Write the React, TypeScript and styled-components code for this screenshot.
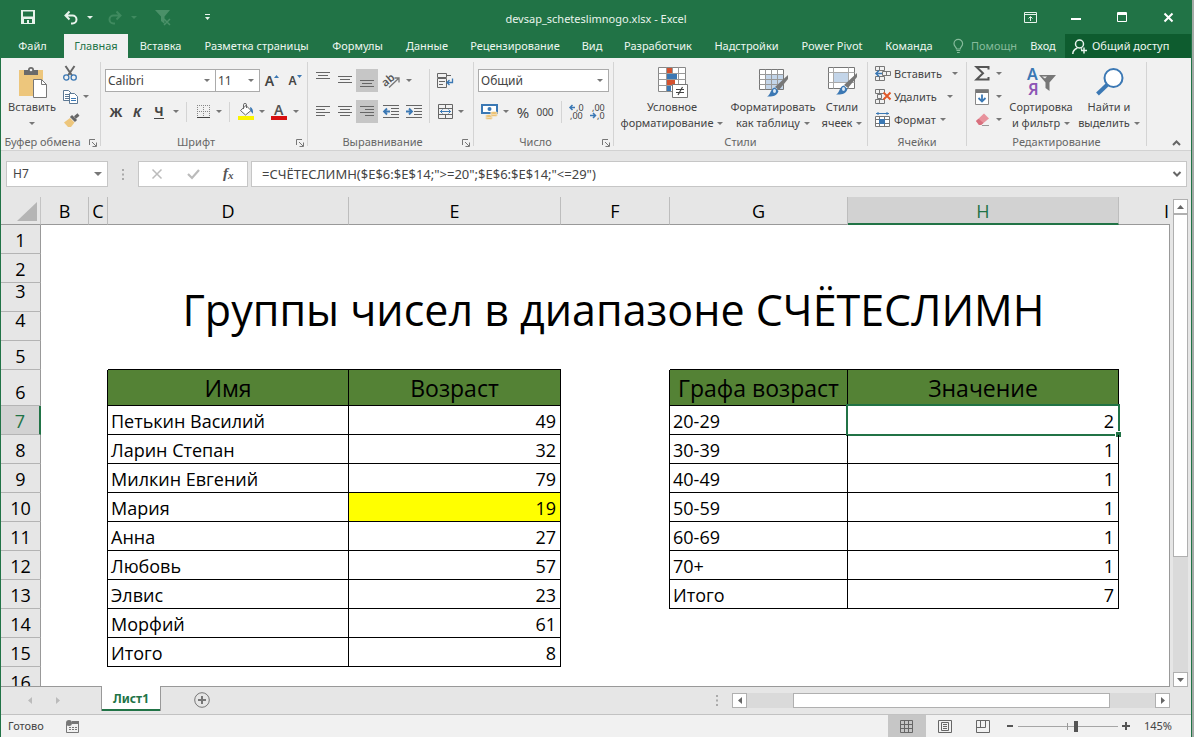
import React from "react";
import styled, { createGlobalStyle, css } from "styled-components";

const ui = `"Noto Sans", "Open Sans", sans-serif`;
const sheetFont = `"Open Sans", "Noto Sans", sans-serif`;
const green = "#217346";
const ink = "#444";
const muted = "#666";
const blue = "#3b78b4";

const Global = createGlobalStyle`
  *, *::before, *::after { box-sizing: border-box; }
  body { margin: 0; background: #a3aba6; }
  button, input, select { font: inherit; color: inherit; margin: 0; padding: 0; border: 0; background: none; }
  svg { display: block; flex: none; overflow: visible; }
`;

const Window = styled.div`
  height: 100vh;
  margin-right: 2px;
  display: flex;
  flex-direction: column;
  overflow: hidden;
  border: solid ${green};
  border-width: 0 1px;
  background: #e6e6e6;
  font-family: ${ui};
  font-size: 12px;
  line-height: 16px;
  color: ${ink};
`;

/* ---------- title bar ---------- */
const TitleBar = styled.header`
  position: relative;
  flex: none;
  height: 34px;
  display: flex;
  justify-content: space-between;
  background: ${green};
  color: #e8f3ec;
`;
const Title = styled.h1`
  position: absolute;
  inset: 0;
  margin: 0;
  padding-top: 11px;
  font-size: 11px;
  line-height: 16px;
  font-weight: 400;
  text-align: center;
`;
const QuickBar = styled.div`
  position: relative;
  z-index: 1;
  display: flex;
  align-items: center;
  padding-left: 14px;
`;
const WinButtons = styled.div`
  position: relative;
  z-index: 1;
  display: flex;
  align-items: center;
`;
const Slot = styled.button<{ $w: number; $on?: boolean; $h?: number }>`
  flex: none;
  width: ${(p) => p.$w}px;
  height: ${(p) => p.$h ?? 23}px;
  display: flex;
  align-items: center;
  justify-content: center;
  background: ${(p) => (p.$on ? "#c6c6c6" : "none")};
`;

/* ---------- ribbon tabs ---------- */
const TabRow = styled.nav`
  flex: none;
  height: 24px;
  display: flex;
  background: ${green};
  color: #eef7f1;
`;
const Tab = styled.button<{ $w: number; $active?: boolean; $dim?: boolean }>`
  flex: none;
  width: ${(p) => p.$w}px;
  display: flex;
  align-items: center;
  justify-content: center;
  gap: 7px;
  font-size: 11px;
  white-space: nowrap;
  ${(p) => p.$active && css`background: #f1f1f1; color: ${green};`}
  ${(p) => p.$dim && css`color: #86bb9b;`}
`;
const Share = styled(Tab)`
  margin-left: auto;
  padding-left: 7px;
  justify-content: flex-start;
  gap: 5px;
  background: #0e5c2f;
`;

/* ---------- ribbon ---------- */
const Ribbon = styled.section`
  flex: none;
  display: flex;
  height: 93px;
  padding: 4px 0;
  background: #f1f1f1;
  border-bottom: 1px solid #d2d2d2;
`;
const Group = styled.div<{ $w: number }>`
  position: relative;
  flex: none;
  width: ${(p) => p.$w}px;
  display: flex;
  flex-direction: column;
  justify-content: space-between;
  border-right: 1px solid #d4d4d4;
`;
const GroupBody = styled.div<{ $pad?: number }>`
  display: flex;
  padding-left: ${(p) => p.$pad ?? 4}px;
`;
const GroupLabel = styled.div<{ $launch?: boolean }>`
  display: flex;
  align-items: center;
  justify-content: center;
  height: 16px;
  margin-bottom: -4px;
  padding-right: ${(p) => (p.$launch ? 16 : 0)}px;
  font-size: 11px;
  color: ${muted};
  white-space: nowrap;
`;
const Launcher = styled.button`
  position: absolute;
  right: 3px;
  bottom: -1px;
`;
const Stack = styled.div<{ $top?: number; $gap?: number }>`
  display: flex;
  flex-direction: column;
  padding-top: ${(p) => p.$top ?? 7}px;
  gap: ${(p) => p.$gap ?? 8}px;
`;
const Row = styled.div`
  display: flex;
  align-items: center;
`;
const Rule = styled.span<{ $h?: number }>`
  flex: none;
  width: 1px;
  height: ${(p) => p.$h ?? 20}px;
  margin: 0 5px;
  background: #d4d4d4;
`;
const Field = styled.label<{ $w: number }>`
  position: relative;
  flex: none;
  width: ${(p) => p.$w}px;
  height: 23px;
  margin-right: -1px;
  display: flex;
  align-items: center;
  background: #fff;
  border: 1px solid #ababab;
  svg { position: absolute; right: 5px; pointer-events: none; }
`;
const Select = styled.select`
  appearance: none;
  width: 100%;
  padding-left: 2px;
  outline: none;
`;
const Glyph = styled.span<{ $italic?: boolean; $under?: boolean; $size?: number; $weight?: number }>`
  font-weight: ${(p) => p.$weight ?? 700};
  font-size: ${(p) => p.$size ?? 13}px;
  line-height: 14px;
  font-style: ${(p) => (p.$italic ? "italic" : "normal")};
  border-bottom: ${(p) => (p.$under ? `1px solid ${ink}` : "0")};
`;
const Digits = styled.span<{ $size?: number }>`
  font-size: ${(p) => p.$size ?? 10}px;
  line-height: 16px;
`;
const Big = styled.button<{ $w: number }>`
  flex: none;
  width: ${(p) => p.$w}px;
  display: flex;
  flex-direction: column;
  align-items: center;
  padding-top: 3px;
  font-size: 11px;
  white-space: nowrap;
`;
const BigIcon = styled.span`
  display: flex;
  align-items: center;
  height: 34px;
  padding-left: 2px;
`;
const Line = styled.span`
  display: flex;
  align-items: center;
  gap: 4px;
  height: 16px;
`;
const Wide = styled.button<{ $gap?: number }>`
  display: flex;
  align-items: center;
  height: 23px;
  white-space: nowrap;
  > span { margin: 0 ${(p) => p.$gap ?? 10}px 0 3px; font-size: 11px; }
`;
const Collapse = styled.button`
  align-self: flex-end;
  margin-left: auto;
  padding: 0 10px 0;
`;

/* ---------- formula bar ---------- */
const FormulaBar = styled.section`
  flex: none;
  display: flex;
  height: 46px;
  padding: 10px 4px 10px 5px;
`;
const Box = styled.label<{ $w?: number }>`
  position: relative;
  flex: ${(p) => (p.$w ? `0 0 ${p.$w}px` : "1 1 0")};
  display: flex;
  align-items: center;
  background: #fff;
  border: 1px solid #c6c6c6;
  > svg { position: absolute; right: 5px; }
`;
const Text = styled.input`
  width: 100%;
  padding: 0 6px;
  outline: none;
`;
const Formula = styled(Text)`
  padding: 0 10px;
  font-size: 13px;
`;
const Grip = styled.span`
  flex: none;
  width: 30px;
  display: flex;
  align-items: center;
  justify-content: center;
`;
const Actions = styled.div`
  flex: none;
  width: 110px;
  margin-right: 3px;
  display: flex;
  align-items: center;
  background: #fff;
  border: 1px solid #c6c6c6;
`;

/* ---------- sheet ---------- */
const Workspace = styled.main`
  flex: 1;
  min-height: 0;
  display: flex;
`;
const GridFrame = styled.div`
  flex: 1;
  min-width: 0;
  overflow: hidden;
  border-bottom: 1px solid #999;
`;
const Grid = styled.table`
  width: 100%;
  table-layout: fixed;
  border-collapse: separate;
  border-spacing: 0;
  background: #fff;
  color: #000;
  font-family: ${sheetFont};
  font-size: 18px;
  line-height: 24px;
  tbody td:last-child { border-right: 1px solid #999; }
`;
const ColHead = styled.th<{ $on?: boolean; $last?: boolean }>`
  height: 28px;
  padding: 1px 1px 0;
  overflow: hidden;
  font-weight: 400;
  text-align: ${(p) => (p.$last ? "right" : "center")};
  background: ${(p) => (p.$on ? "#d2d2d2" : "#e6e6e6")};
  color: ${(p) => (p.$on ? green : "#000")};
  border-right: ${(p) => (p.$last ? 0 : 1)}px solid #bdbdbd;
  border-bottom: ${(p) => (p.$on ? `2px solid ${green}` : "1px solid #999")};
`;
const Corner = styled.th`
  padding: 0 3px 3px;
  background: #e6e6e6;
  vertical-align: bottom;
  border-right: 1px solid #c4c4c4;
  border-bottom: 1px solid #999;
  svg { margin-left: auto; }
`;
const RowHead = styled.th<{ $on?: boolean; $top?: boolean }>`
  padding: 0 0 1px;
  font-weight: 400;
  line-height: ${(p) => (p.$top ? 16 : 24)}px;
  vertical-align: ${(p) => (p.$top ? "top" : "bottom")};
  background: ${(p) => (p.$on ? "#d2d2d2" : "#e6e6e6")};
  color: ${(p) => (p.$on ? green : "#000")};
  border-right: ${(p) => (p.$on ? `2px solid ${green}` : "1px solid #999")};
  border-bottom: 1px solid #b4b4b4;
`;
const Cell = styled.td<{
  $right?: boolean;
  $bottom?: boolean;
  $num?: boolean;
  $head?: boolean;
  $mark?: boolean;
  $selected?: boolean;
}>`
  position: relative;
  padding: 0 4px 1px 3px;
  white-space: nowrap;
  text-align: ${(p) => (p.$head ? "center" : p.$num ? "right" : "left")};
  vertical-align: ${(p) => (p.$head ? "middle" : "bottom")};
  border: 0 solid #000;
  border-right-width: ${(p) => (p.$right ? 1 : 0)}px;
  border-bottom-width: ${(p) => (p.$bottom ? 1 : 0)}px;
  ${(p) => p.$head && css`padding: 0; background: #548235; font-size: 23px; line-height: 30px;`}
  ${(p) => p.$mark && css`background: #ff0;`}
  ${(p) =>
    p.$selected &&
    css`
      &::before {
        content: "";
        position: absolute;
        inset: -2px;
        border: 2px solid ${green};
      }
      &::after {
        content: "";
        position: absolute;
        right: -3px;
        bottom: -3px;
        width: 6px;
        height: 6px;
        background: ${green};
        border: solid #fff;
        border-width: 1px 0 0 1px;
      }
    `}
`;
const TitleCell = styled.td`
  padding: 0 0 5px;
  text-align: center;
  vertical-align: middle;
  font-size: 43px;
  line-height: 52px;
  white-space: nowrap;
`;

/* ---------- scroll bars ---------- */
const VScroll = styled.div`
  flex: none;
  width: 21px;
  padding: 2px 2px 0 3px;
  display: flex;
  flex-direction: column;
`;
const HScroll = styled.div`
  flex: none;
  width: 438px;
  height: 15px;
  margin-right: 21px;
  display: flex;
`;
const ScrollButton = styled.button`
  flex: none;
  width: 15px;
  height: 15px;
  display: flex;
  align-items: center;
  justify-content: center;
  background: #fff;
  border: 1px solid #b0b0b0;
`;
const Track = styled.div<{ $v?: boolean }>`
  flex: 1;
  display: flex;
  flex-direction: ${(p) => (p.$v ? "column" : "row")};
  width: ${(p) => (p.$v ? "15px" : "auto")};
  background: #dadada;
`;
const Gap = styled.span<{ $n: number }>`
  flex: ${(p) => p.$n} 0 0;
`;
const Thumb = styled.span<{ $n: number }>`
  flex: ${(p) => p.$n} 0 0;
  background: #fff;
  border: 1px solid #b0b0b0;
`;

/* ---------- sheet tabs, status ---------- */
const SheetBar = styled.section`
  flex: none;
  height: 28px;
  display: flex;
  align-items: center;
  justify-content: space-between;
  border-bottom: 1px solid #c2c2c2;
`;
const SheetTabs = styled.div`
  flex: 1;
  align-self: stretch;
  display: flex;
`;
const SheetTab = styled.button`
  position: relative;
  width: 60px;
  height: 25px;
  margin: -1px 30px 0 29px;
  background: #fff;
  border: solid #999;
  border-width: 0 1px;
  box-shadow: inset 0 -2px 0 ${green};
  color: ${green};
  font-weight: 700;
`;
const StatusBar = styled.footer`
  flex: none;
  height: 22px;
  display: flex;
  align-items: center;
  padding: 0 19px 0 7px;
  background: #f1f1f1;
  font-size: 11px;
`;
const Zoom = styled.input`
  appearance: none;
  width: 100px;
  height: 22px;
  outline: none;
  background:
    linear-gradient(#999, #999) 50% 50% / 1px 7px no-repeat,
    linear-gradient(#a6a6a6, #a6a6a6) 0 50% / 100% 1px no-repeat;
  &::-webkit-slider-thumb {
    appearance: none;
    width: 4px;
    height: 11px;
    background: #555;
  }
`;
const Spacer = styled.span<{ $w?: number }>`
  flex: ${(p) => (p.$w ? `0 0 ${p.$w}px` : "1")};
`;

/* ---------- icons ---------- */
type SvgProps = { w: number; h: number; children: React.ReactNode; stroke?: string };
const Svg = ({ w, h, children, stroke = "none" }: SvgProps) => (
  <svg width={w} height={h} viewBox={`0 0 ${w} ${h}`} fill="none" stroke={stroke} aria-hidden="true">
    {children}
  </svg>
);
const Caret = ({ color = "#777" }) => (
  <Svg w={6} h={3}><path d="M0 0h6L3 3z" fill={color} /></Svg>
);
const Drop = ({ w = 14 }: { w?: number }) => (
  <Slot $w={w} aria-label="Ещё"><Caret /></Slot>
);
const LaunchIcon = () => (
  <Svg w={8} h={8} stroke="#777"><path d="M.5 6V.5H6M3 3l4 4M7.500 3.500v4h-4" /></Svg>
);
const Lines = ({ xs, top }: { xs: [number, number][]; top: number }) => (
  <Svg w={14} h={17} stroke="#666">
    {xs.map(([a, b], i) => <path key={i} d={`M${a} ${top + i * 3 + 0.5}H${b}`} />)}
  </Svg>
);
const full: [number, number] = [0, 14];
const SaveIcon = () => (
  <Svg w={14} h={14}>
    <path fillRule="evenodd" fill="#e8f3ec" d="M0 0h14v14H0zM2 1.500h10v5H2zM3 9h8v4H8v-3H6v3H3z" />
  </Svg>
);
const UndoIcon = ({ flip, color = "#e8f3ec" }: { flip?: boolean; color?: string }) => (
  <Svg w={14} h={13}>
    <g transform={flip ? "matrix(-1 0 0 1 14 0)" : undefined}>
      <path d="M5.500 .5L1.500 4.500l4 4M2 4.500h6.500a4 4 0 0 1 0 8H7" stroke={color} strokeWidth="2" />
    </g>
  </Svg>
);
const FunnelX = () => (
  <Svg w={16} h={15}>
    <path d="M0 0h15L9.500 6.500V14L6 11V6.500z" fill="#4a9068" />
    <path d="M9 9l6 6M15 9l-6 6" stroke="#4a9068" strokeWidth="1.500" />
  </Svg>
);
const PasteIcon = () => (
  <Svg w={28} h={31}>
    <rect y="3" width="24" height="26" fill="#edc67c" />
    <path d="M5 3h4a3 3 0 0 1 6 0h4v5H5z" fill="#6a6a6a" />
    <circle cx="12" cy="3" r="1.300" fill="#f1f1f1" />
    <path d="M14.500 12.500h8l5 5v13h-13z" fill="#fff" stroke="#777" />
    <path d="M22.500 12.500v5h5" stroke="#777" />
  </Svg>
);
const CutIcon = () => (
  <Svg w={14} h={15}>
    <path d="M2.500 0L9 9.500M11.500 0L5 9.500" stroke="#666" strokeWidth="2" />
    <circle cx="3.300" cy="11.500" r="2.600" stroke={blue} strokeWidth="1.300" />
    <circle cx="10.700" cy="11.500" r="2.600" stroke={blue} strokeWidth="1.300" />
  </Svg>
);
const CopyIcon = () => (
  <Svg w={15} h={14}>
    <path d="M.5 .5h5l3 3v7h-8zM2 4.500h4M2 6.500h4M2 8.500h4" fill="#fff" stroke="#5c7894" />
    <path d="M6.500 3.500h5l3 3v7h-8z" fill="#fff" stroke="#5c7894" />
    <path d="M8 8.500h5M8 10.500h5" stroke={blue} />
  </Svg>
);
const BrushIcon = () => (
  <Svg w={15} h={14}>
    <path d="M14.500 1.500L11 4.500M7 3l5 5" stroke="#666" strokeWidth="3" />
    <path d="M0 9.500L6 5l4.500 4.500L7 14H4z" fill="#edc67c" />
  </Svg>
);
const BordersIcon = () => (
  <Svg w={13} h={13} stroke="#888">
    <path d="M0 .5h13M.5 0v13M6.500 0v13M12.500 0v13M0 6.500h13" strokeDasharray="1 1" />
    <path d="M0 12.500h13" stroke="#444" />
  </Svg>
);
const FillIcon = () => (
  <Svg w={16} h={17}>
    <path d="M2.500 7.500L8 2.500l5 5-5.500 4.500z" fill="#fff" stroke="#666" />
    <path d="M5.500 6V1.500q0-1 1.500-1t1.500 1V5" stroke="#666" />
    <path d="M12 4q3.500 1 3 7l-2.500-3z" fill={blue} />
    <rect y="13" width="16" height="4" fill="#fbf400" />
  </Svg>
);
const OrientIcon = () => (
  <Svg w={17} h={15}>
    <text x="-1" y="11" transform="rotate(-40 5 8)" fontSize="11" fontWeight="600" fill="#555" fontFamily="Noto Sans">ab</text>
    <path d="M6 14.500L15.500 5.500M11.500 5H16v4.500" stroke="#777" strokeWidth="1.300" />
  </Svg>
);
const WrapIcon = () => (
  <Svg w={17} h={16}>
    <path d="M.5 .5h9v4h-9zM.5 5.500h9v9h-9zM9.500 2.500H14" stroke="#666" />
    <path d="M2 8.500h6M2 11.500h4" stroke="#666" />
    <path d="M15.500 5.500v4H10M12.500 7L10 9.500l2.500 2.500" stroke={blue} strokeWidth="1.300" />
  </Svg>
);
const MergeIcon = () => (
  <Svg w={15} h={15}>
    <path d="M.5 .5h14v14H.5zM.5 4.500h14M.5 10.500h14M7.500 .5v4M7.500 10.500v4" stroke="#666" />
    <path d="M2 7.500h11M4.500 5.500l-2 2 2 2M10.500 5.500l2 2-2 2" stroke={blue} />
  </Svg>
);
const IndentIcon = ({ right }: { right?: boolean }) => (
  <Svg w={16} h={14}>
    <path d="M0 .5h16M8 3.500h8M8 6.500h8M8 9.500h8M0 12.500h16" stroke="#666" />
    <path d={right ? "M0 6.500h5M3 3.500l3 3-3 3" : "M7 6.500H2M4 3.500l-3 3 3 3"} stroke={blue} strokeWidth="1.800" />
  </Svg>
);
const MoneyIcon = () => (
  <Svg w={17} h={16}>
    <path d="M1 1h15v8H1z" fill="#fff" stroke={blue} strokeWidth="2" />
    <circle cx="8.500" cy="5" r="2" fill={blue} />
    <g fill="#edc06c" stroke="#f1f1f1" strokeWidth=".6">
      <ellipse cx="8" cy="14" rx="3.500" ry="1.500" /><ellipse cx="8" cy="12" rx="3.500" ry="1.500" />
      <ellipse cx="13" cy="11" rx="3.500" ry="1.500" /><ellipse cx="13" cy="9" rx="3.500" ry="1.500" />
    </g>
  </Svg>
);
const DecimalIcon = ({ less }: { less?: boolean }) => (
  <Svg w={15} h={16}>
    <g fontSize="9" fill="#444" fontFamily="Noto Sans">
      <text x={less ? 2 : 7} y="7">{less ? ",00" : ",0"}</text>
      <text x={less ? 7 : 1} y="15">{less ? ",0" : ",00"}</text>
    </g>
    <path
      d={less ? "M0 11.500h5M3 9l2.500 2.500L3 14" : "M6 3.500H1M3.500 1L1 3.500 3.500 6"}
      stroke={blue}
      strokeWidth="1.500"
    />
  </Svg>
);
const CondIcon = () => (
  <Svg w={31} h={31}>
    <path d="M.5 .5h27v24H.5z" fill="#fff" stroke="#888" />
    <path d="M.5 6.500h27M.5 12.500h27M.5 18.500h27M8.500 .5v24M14.500 .5v24M20.500 .5v24" stroke="#999" />
    <path d="M9 1h5v5H9zM9 13h8v5H9z" fill="#d35230" />
    <path d="M9 7h10v5H9zM9 19h4v5H9z" fill={blue} />
    <path d="M14.500 17.500h15v13h-15z" fill="#fff" stroke="#777" />
    <path d="M18 22.500h8M18 25.500h8M24.500 20l-4.500 8" stroke="#444" strokeWidth="1.200" />
  </Svg>
);
const Brush = ({ x, y }: { x: number; y: number }) => (
  <g transform={`translate(${x} ${y})`}>
    <path d="M21 0v4L12 15l-4-3z" fill="#777" />
    <path d="M8 12.500l3.500 3.500C10 21 5 22 0 21.500c4-1.500 3-8 8-9z" fill={blue} />
    <ellipse cx="7.500" cy="16" rx="1.500" ry="2" fill="#dbe8f4" />
  </g>
);
const TableIcon = () => (
  <Svg w={30} h={30}>
    <path d="M.5 2.500h24v20H.5z" fill="#fff" stroke="#777" />
    <path d="M7 8h17v14H7z" fill="#c3d5e9" />
    <path d="M.5 7.500h24M.5 12.500h24M.5 17.500h24M6.500 2.500v20M12.500 2.500v20M18.500 2.500v20" stroke="#999" />
    <Brush x={8} y={8} />
  </Svg>
);
const CellStyleIcon = () => (
  <Svg w={30} h={30}>
    <path d="M.5 .5h26v21H.5z" fill="#fff" stroke="#777" />
    <path d="M.5 5.500h26M.5 15.500h26M5.500 .5v21M20.500 .5v21" stroke="#aaa" />
    <path d="M6 6h14v9H6z" fill="#c3d5e9" />
    <Brush x={8} y={6} />
  </Svg>
);
const SmallGrid = ({ kind }: { kind: "insert" | "delete" | "format" }) => (
  <Svg w={16} h={16}>
    {kind === "format" ? (
      <>
        <path d="M.5 4.500h14v10H.5zM.5 7.500h14M.5 11.500h14M4.500 4.500v10M9.500 4.500v10" stroke="#777" fill="#fff" />
        <path d="M4 7h6v5H4z" fill={blue} />
        <path d="M1 1.500h13M3 0v3M12 0v3" stroke={blue} />
      </>
    ) : (
      <>
        <path d="M.5 .5h9v4h-9zM4.500 .5v4M.5 10.500h9v4h-9zM4.500 10.500v4" stroke="#777" />
        <path d={kind === "insert" ? "M7.500 5.500h8v4h-8zM11.500 5.500v4" : "M2.500 5.500h4v4h-4z"} stroke="#777" />
        {kind === "insert"
          ? <path d="M7 7.500H1M4 4.500l-3 3 3 3" stroke={blue} strokeWidth="1.600" />
          : <path d="M8.500 3.500l7 7M15.500 3.500l-7 7" stroke="#e0592a" strokeWidth="2" />}
      </>
    )}
  </Svg>
);
const SigmaIcon = () => (
  <Svg w={15} h={15}><path d="M13.500 3.500V1H1.500L8 7.200 1.500 13.500h12V11" stroke="#555" strokeWidth="2" /></Svg>
);
const FillDownIcon = () => (
  <Svg w={15} h={16}>
    <path d="M.5 .5h13v15H.5z" fill="#fff" stroke="#888" />
    <path d="M1 1h12v3H1z" fill="#777" />
    <path d="M7 5.500v7M3.500 9L7 12.500 10.500 9" stroke={blue} strokeWidth="1.800" />
  </Svg>
);
const EraserIcon = () => (
  <Svg w={15} h={13}>
    <path d="M1 8l8-7.500 5 5L6 12H4z" fill="#e8929c" />
    <path d="M1 8l2.500-2.300L8.500 10 6 12H4z" fill="#d8707e" />
    <path d="M7 12.500h7" stroke="#999" />
  </Svg>
);
const SortIcon = () => (
  <Svg w={30} h={30}>
    <g fontSize="16" fontWeight="600" fontFamily="Noto Sans">
      <text x="0" y="13" fill={blue}>А</text>
      <text x="1" y="28" fill="#8d55b5">Я</text>
    </g>
    <path d="M12 8h17l-6.500 7.500V24l-4-3v-5.500z" fill="#777" />
    <path d="M15 9.500h5l-2 2z" fill="#eee" />
  </Svg>
);
const FindIcon = () => (
  <Svg w={28} h={28}>
    <path d="M11.500 16.500L1.500 26" stroke={blue} strokeWidth="4" />
    <circle cx="17.500" cy="10" r="9" fill="#fff" stroke={blue} strokeWidth="2" />
  </Svg>
);
const BulbIcon = () => (
  <Svg w={11} h={14} stroke="#86bb9b">
    <path d="M3.500 10C3.500 8 1 7.500 1 4.700a4.300 4.300 0 0 1 8.600 0C9.600 7.500 7.200 8 7.200 10zM3.500 11.500h3.700M4 13.500h2.700" strokeWidth="1.200" />
  </Svg>
);
const PersonIcon = () => (
  <Svg w={15} h={15} stroke="#e8f3ec">
    <circle cx="7.500" cy="5" r="4" strokeWidth="1.500" />
    <path d="M.8 15c0-3 2-5 4.500-6M9 9.500l1 1M12 8.500v6M9 11.500h6" strokeWidth="1.500" />
  </Svg>
);
const Dots = () => (
  <Svg w={2} h={11}><path d="M0 0h2v2H0zM0 4.500h2v2H0zM0 9h2v2H0z" fill="#aaa" /></Svg>
);
const Arrow = ({ d, w = 7, h = 7, color = "#666" }: { d: string; w?: number; h?: number; color?: string }) => (
  <Svg w={w} h={h}><path d={d} fill={color} /></Svg>
);

/* ---------- data ---------- */
const tabs: [string, number][] = [
  ["Вставка", 65], ["Разметка страницы", 127], ["Формулы", 75], ["Данные", 64], ["Рецензирование", 112],
  ["Вид", 42], ["Разработчик", 90], ["Надстройки", 87], ["Power Pivot", 84], ["Команда", 70],
];
const people: [string, number][] = [
  ["Петькин Василий", 49], ["Ларин Степан", 32], ["Милкин Евгений", 79], ["Мария", 19], ["Анна", 27],
  ["Любовь", 57], ["Элвис", 23], ["Морфий", 61], ["Итого", 8],
];
const ranges: [string, number][] = [
  ["20-29", 2], ["30-39", 1], ["40-49", 1], ["50-59", 1], ["60-69", 1], ["70+", 1], ["Итого", 7],
];
const columns: [string, number | undefined][] = [
  ["B", 48], ["C", 19], ["D", 241], ["E", 212], ["F", 109], ["G", 178], ["H", 271], ["I", undefined],
];

const BodyRow = styled.tr<{ $h?: number }>`
  height: ${(p) => p.$h ?? 29}px;
`;

const Sheet = () => (
  <Grid>
    <colgroup>
      <col width={40} />
      {columns.map(([c, w]) => <col key={c} width={w} />)}
    </colgroup>
    <thead>
      <tr>
        <Corner aria-label="Выделить всё"><Svg w={20} h={19}><path d="M20 0v19H0z" fill="#b5b5b5" /></Svg></Corner>
        {columns.map(([c]) => <ColHead key={c} scope="col" $on={c === "H"} $last={c === "I"}>{c}</ColHead>)}
      </tr>
    </thead>
    <tbody>
      {[1, 2].map((n) => (
        <BodyRow key={n}><RowHead scope="row">{n}</RowHead><td colSpan={8} /></BodyRow>
      ))}
      <BodyRow>
        <RowHead scope="row" $top>3</RowHead>
        <td colSpan={2} rowSpan={2} />
        <TitleCell colSpan={5} rowSpan={2}>Группы чисел в диапазоне СЧЁТЕСЛИМН</TitleCell>
        <td rowSpan={2} />
      </BodyRow>
      <BodyRow><RowHead scope="row" $top>4</RowHead></BodyRow>
      <BodyRow>
        <RowHead scope="row">5</RowHead>
        <Cell colSpan={2} /><Cell $bottom /><Cell $bottom /><Cell /><Cell $bottom /><Cell $bottom /><Cell />
      </BodyRow>
      <BodyRow $h={36}>
        <RowHead scope="row">6</RowHead>
        <Cell colSpan={2} $right />
        <Cell $head $right $bottom>Имя</Cell>
        <Cell $head $right $bottom>Возраст</Cell>
        <Cell $right />
        <Cell $head $right $bottom>Графа возраст</Cell>
        <Cell $head $right $bottom>Значение</Cell>
        <Cell />
      </BodyRow>
      {people.map(([name, age], i) => {
        const range = ranges[i];
        return (
          <BodyRow key={name}>
            <RowHead scope="row" $on={i === 0}>{i + 7}</RowHead>
            <Cell colSpan={2} $right />
            <Cell $right $bottom>{name}</Cell>
            <Cell $right $bottom $num $mark={age === 19}>{age}</Cell>
            <Cell $right={!!range} />
            <Cell $right={!!range} $bottom={!!range}>{range?.[0]}</Cell>
            <Cell $right={!!range} $bottom={!!range} $num $selected={i === 0}>{range?.[1]}</Cell>
            <Cell />
          </BodyRow>
        );
      })}
      <BodyRow><RowHead scope="row">16</RowHead><td colSpan={8} /></BodyRow>
    </tbody>
  </Grid>
);

const RibbonGroups = () => (
  <Ribbon>
    <Group $w={100}>
      <GroupBody $pad={3}>
        <Big $w={56}>
          <BigIcon><PasteIcon /></BigIcon>
          <Line>Вставить</Line>
          <Line><Caret /></Line>
        </Big>
        <Stack $top={0} $gap={0}>
          <Slot $w={20} aria-label="Вырезать"><CutIcon /></Slot>
          <Row><Slot $w={20} aria-label="Копировать"><CopyIcon /></Slot><Drop w={12} /></Row>
          <Slot $w={22} aria-label="Формат по образцу"><BrushIcon /></Slot>
        </Stack>
      </GroupBody>
      <GroupLabel $launch>Буфер обмена</GroupLabel>
      <Launcher aria-label="Буфер обмена"><LaunchIcon /></Launcher>
    </Group>

    <Group $w={207}>
      <GroupBody>
        <Stack>
          <Row>
            <Field $w={111}><Select aria-label="Шрифт"><option>Calibri</option></Select><Caret /></Field>
            <Field $w={45}><Select aria-label="Размер шрифта"><option>11</option></Select><Caret /></Field>
            <Slot $w={26} aria-label="Увеличить размер">
              <Glyph $size={14} $weight={600}>A</Glyph><Svg w={5} h={12}><path d="M0 3h5L2.500 0z" fill={blue} /></Svg>
            </Slot>
            <Slot $w={20} aria-label="Уменьшить размер">
              <Glyph $size={12} $weight={600}>A</Glyph><Svg w={5} h={12}><path d="M0 0h5L2.500 3z" fill={blue} /></Svg>
            </Slot>
          </Row>
          <Row>
            <Slot $w={22}><Glyph>Ж</Glyph></Slot>
            <Slot $w={20}><Glyph $italic>К</Glyph></Slot>
            <Slot $w={24}><Glyph $under>Ч</Glyph></Slot>
            <Drop w={10} />
            <Rule />
            <Slot $w={22} aria-label="Границы"><BordersIcon /></Slot>
            <Drop w={10} />
            <Rule />
            <Slot $w={22} aria-label="Цвет заливки"><FillIcon /></Slot>
            <Drop w={10} />
            <Slot $w={24} aria-label="Цвет текста">
              <Svg w={16} h={17}>
                <text x="3" y="12" fontSize="14" fontWeight="600" fill="#555" fontFamily="Noto Sans">А</text>
                <rect y="13" width="16" height="4" fill="#d80f0f" />
              </Svg>
            </Slot>
            <Drop w={10} />
          </Row>
        </Stack>
      </GroupBody>
      <GroupLabel $launch>Шрифт</GroupLabel>
      <Launcher aria-label="Шрифт"><LaunchIcon /></Launcher>
    </Group>

    <Group $w={166}>
      <GroupBody>
        <Stack>
          <Row>
            <Slot $w={22} aria-label="По верхнему краю"><Lines top={0} xs={[full, [2, 12], full]} /></Slot>
            <Slot $w={22} aria-label="По середине"><Lines top={4} xs={[full, [2, 12], full]} /></Slot>
            <Slot $w={22} $on aria-label="По нижнему краю"><Lines top={8} xs={[full, [2, 12], full]} /></Slot>
            <Slot $w={26} aria-label="Ориентация"><OrientIcon /></Slot>
            <Drop w={10} />
          </Row>
          <Row>
            <Slot $w={22} aria-label="По левому краю"><Lines top={3} xs={[full, [0, 9], full, [0, 9]]} /></Slot>
            <Slot $w={22} aria-label="По центру"><Lines top={3} xs={[full, [2, 12], full, [2, 12]]} /></Slot>
            <Slot $w={22} $on aria-label="По правому краю"><Lines top={3} xs={[full, [5, 14], full, [5, 14]]} /></Slot>
            <Slot $w={26} aria-label="Уменьшить отступ"><IndentIcon /></Slot>
            <Slot $w={20} aria-label="Увеличить отступ"><IndentIcon right /></Slot>
          </Row>
        </Stack>
        <Stack $gap={0}><Rule $h={54} /></Stack>
        <Stack>
          <Slot $w={20} aria-label="Перенос текста"><WrapIcon /></Slot>
          <Row><Slot $w={20} aria-label="Объединить"><MergeIcon /></Slot><Drop w={12} /></Row>
        </Stack>
      </GroupBody>
      <GroupLabel $launch>Выравнивание</GroupLabel>
      <Launcher aria-label="Выравнивание"><LaunchIcon /></Launcher>
    </Group>

    <Group $w={140}>
      <GroupBody>
        <Stack>
          <Field $w={131}><Select aria-label="Числовой формат"><option>Общий</option></Select><Caret /></Field>
          <Row>
            <Slot $w={22} aria-label="Денежный формат"><MoneyIcon /></Slot>
            <Drop w={12} />
            <Slot $w={22}><Digits $size={15}>%</Digits></Slot>
            <Slot $w={22}><Digits>000</Digits></Slot>
            <Rule $h={22} />
            <Slot $w={18} aria-label="Увеличить разрядность"><DecimalIcon /></Slot>
            <Slot $w={24} aria-label="Уменьшить разрядность"><DecimalIcon less /></Slot>
          </Row>
        </Stack>
      </GroupBody>
      <GroupLabel $launch>Число</GroupLabel>
      <Launcher aria-label="Число"><LaunchIcon /></Launcher>
    </Group>

    <Group $w={254}>
      <GroupBody>
        <Big $w={108}>
          <BigIcon><CondIcon /></BigIcon>
          <Line>Условное</Line>
          <Line>форматирование <Caret /></Line>
        </Big>
        <Big $w={94}>
          <BigIcon><TableIcon /></BigIcon>
          <Line>Форматировать</Line>
          <Line>как таблицу <Caret /></Line>
        </Big>
        <Big $w={44}>
          <BigIcon><CellStyleIcon /></BigIcon>
          <Line>Стили</Line>
          <Line>ячеек <Caret /></Line>
        </Big>
      </GroupBody>
      <GroupLabel>Стили</GroupLabel>
    </Group>

    <Group $w={99}>
      <GroupBody $pad={7}>
        <Stack $top={0} $gap={0}>
          <Wide><SmallGrid kind="insert" /><span>Вставить</span><Caret /></Wide>
          <Wide><SmallGrid kind="delete" /><span>Удалить</span><Caret /></Wide>
          <Wide $gap={4}><SmallGrid kind="format" /><span>Формат</span><Caret /></Wide>
        </Stack>
      </GroupBody>
      <GroupLabel>Ячейки</GroupLabel>
    </Group>

    <Group $w={180}>
      <GroupBody>
        <Stack $top={0} $gap={0}>
          <Row><Slot $w={22} aria-label="Сумма"><SigmaIcon /></Slot><Drop w={12} /></Row>
          <Row><Slot $w={22} aria-label="Заполнить"><FillDownIcon /></Slot><Drop w={12} /></Row>
          <Row><Slot $w={22} aria-label="Очистить"><EraserIcon /></Slot><Drop w={12} /></Row>
        </Stack>
        <Big $w={72}>
          <BigIcon><SortIcon /></BigIcon>
          <Line>Сортировка</Line>
          <Line>и фильтр <Caret /></Line>
        </Big>
        <Big $w={64}>
          <BigIcon><FindIcon /></BigIcon>
          <Line>Найти и</Line>
          <Line>выделить <Caret /></Line>
        </Big>
      </GroupBody>
      <GroupLabel>Редактирование</GroupLabel>
    </Group>
    <Collapse aria-label="Свернуть ленту">
      <Svg w={9} h={6} stroke="#666"><path d="M1 5l3.500-3.500L8 5" strokeWidth="2" /></Svg>
    </Collapse>
  </Ribbon>
);

export default function App() {
  return (
    <Window>
      <Global />
      <TitleBar>
        <Title>devsap_scheteslimnogo.xlsx - Excel</Title>
        <QuickBar>
          <Slot $w={26} aria-label="Сохранить"><SaveIcon /></Slot>
          <Spacer $w={16} />
          <Slot $w={28} aria-label="Отменить"><UndoIcon /></Slot>
          <Slot $w={10} aria-label="Список отмены"><Caret color="#e8f3ec" /></Slot>
          <Spacer $w={6} />
          <Slot $w={28} aria-label="Вернуть"><UndoIcon flip color="#3f8a5f" /></Slot>
          <Slot $w={10} aria-label="Список возврата"><Caret color="#3f8a5f" /></Slot>
          <Spacer $w={10} />
          <Slot $w={28} aria-label="Очистить фильтр"><FunnelX /></Slot>
          <Spacer $w={20} />
          <Slot $w={20} aria-label="Настройка панели">
            <Svg w={5} h={6}><path d="M0 0h5v1H0zM0 3h5L2.500 6z" fill="#e8f3ec" /></Svg>
          </Slot>
        </QuickBar>
        <WinButtons>
          <Slot $w={46} aria-label="Параметры ленты">
            <Svg w={13} h={11} stroke="#e8f3ec"><path d="M.5 .5h12v10H.5zM.5 2.500h12M6.500 9V5M4.500 6.500l2-2 2 2" /></Svg>
          </Slot>
          <Slot $w={46} aria-label="Свернуть"><Svg w={10} h={6}><path d="M0 4h10v2H0z" fill="#fff" /></Svg></Slot>
          <Slot $w={46} aria-label="Развернуть">
            <Svg w={10} h={10} stroke="#fff"><path d="M.5 .5h9v9H.5zM0 1.500h10M0 2.500h10" /></Svg>
          </Slot>
          <Slot $w={46} aria-label="Закрыть">
            <Svg w={9} h={9} stroke="#fff"><path d="M.5 .5l8 8M8.500 .5l-8 8" strokeWidth="2" /></Svg>
          </Slot>
        </WinButtons>
      </TitleBar>

      <TabRow>
        <Tab $w={63}>Файл</Tab>
        <Tab $w={64} $active>Главная</Tab>
        {tabs.map(([name, w]) => <Tab key={name} $w={w}>{name}</Tab>)}
        <Tab $w={82} $dim><BulbIcon />Помощн</Tab>
        <Tab $w={34}>Вход</Tab>
        <Share $w={126}><PersonIcon />Общий доступ</Share>
      </TabRow>

      <RibbonGroups />

      <FormulaBar>
        <Box $w={102}>
          <Text aria-label="Имя ячейки" defaultValue="H7" />
          <Arrow w={8} h={4} d="M0 0h8L4 4z" color="#777" />
        </Box>
        <Grip><Dots /></Grip>
        <Actions>
          <Slot $w={36} aria-label="Отмена">
            <Svg w={10} h={10} stroke="#bbb"><path d="M.5 .5l9 9M9.500 .5l-9 9" strokeWidth="1.500" /></Svg>
          </Slot>
          <Slot $w={36} aria-label="Ввод">
            <Svg w={13} h={10} stroke="#bbb"><path d="M1 5l4 4 7-8" strokeWidth="2.200" /></Svg>
          </Slot>
          <Slot $w={36} aria-label="Вставить функцию">
            <Svg w={14} h={14}>
              <g fontFamily="Liberation Serif" fontStyle="italic" fontWeight="700" fill="#555">
                <text x="1" y="11" fontSize="15">f</text><text x="6" y="12" fontSize="11">x</text>
              </g>
            </Svg>
          </Slot>
        </Actions>
        <Box>
          <Formula aria-label="Строка формул" defaultValue={'=СЧЁТЕСЛИМН($E$6:$E$14;">=20";$E$6:$E$14;"<=29")'} />
          <Svg w={8} h={6} stroke="#666"><path d="M.5 1L4 4.500 7.500 1" strokeWidth="2" /></Svg>
        </Box>
      </FormulaBar>

      <Workspace>
        <GridFrame><Sheet /></GridFrame>
        <VScroll>
          <ScrollButton aria-label="Вверх"><Arrow h={4} d="M0 4h7L3.500 0z" /></ScrollButton>
          <Track $v><Thumb $n={344} /><Gap $n={116} /></Track>
          <ScrollButton aria-label="Вниз"><Arrow h={4} d="M0 0h7L3.500 4z" /></ScrollButton>
        </VScroll>
      </Workspace>

      <SheetBar>
        <SheetTabs>
          <Spacer $w={15} />
          <Slot $w={28} $h={26} aria-label="Предыдущий лист"><Arrow w={4} d="M4 0v7L0 3.500z" color="#bbb" /></Slot>
          <Slot $w={28} $h={26} aria-label="Следующий лист"><Arrow w={4} d="M0 0v7l4-3.500z" color="#bbb" /></Slot>
          <SheetTab>Лист1</SheetTab>
          <Slot $w={22} $h={26} aria-label="Новый лист">
            <Svg w={16} h={16} stroke="#777"><circle cx="8" cy="8" r="7.300" /><path d="M8 4v8M4 8h8" strokeWidth="2" /></Svg>
          </Slot>
        </SheetTabs>
        <Grip><Dots /></Grip>
        <HScroll>
          <ScrollButton aria-label="Влево"><Arrow w={4} d="M4 0v7L0 3.500z" /></ScrollButton>
          <Track><Gap $n={46} /><Thumb $n={317} /><Gap $n={45} /></Track>
          <ScrollButton aria-label="Вправо"><Arrow w={4} d="M0 0v7l4-3.500z" /></ScrollButton>
        </HScroll>
      </SheetBar>

      <StatusBar>
        <span>Готово</span>
        <Spacer $w={22} />
        <Svg w={13} h={13}>
          <path d="M.5 4v8.500h12V3.500H6" stroke="#777" /><path d="M6 1h7v3H6z" fill="#777" />
          <circle cx="3" cy="3" r="3" fill="#777" />
          <path d="M3 7.500h8M3 9.500h8" stroke="#777" strokeDasharray="2 1" />
        </Svg>
        <Spacer />
        <Slot $w={38} $h={22} $on aria-label="Обычный">
          <Svg w={13} h={13} stroke="#666"><path d="M.5 .5h12v12H.5zM4.500 .5v12M8.500 .5v12M.5 4.500h12M.5 8.500h12" /></Svg>
        </Slot>
        <Slot $w={38} $h={22} aria-label="Разметка">
          <Svg w={14} h={13} stroke="#666"><path d="M.5 .5h13v12H.5zM3.500 2.500h7v8h-7zM5 4.500h4M5 6.500h4M5 8.500h4" /></Svg>
        </Slot>
        <Slot $w={38} $h={22} aria-label="Страничный">
          <Svg w={14} h={13} stroke="#666"><path d="M.5 .5h13v12H.5zM4.500 .5v7M9.500 .5v7M.5 7.500h9" /></Svg>
        </Slot>
        <Slot $w={16} $h={22} aria-label="Уменьшить"><Svg w={6} h={2}><path d="M0 0h6v2H0z" fill="#555" /></Svg></Slot>
        <Zoom type="range" min={0} max={100} defaultValue={58} aria-label="Масштаб" />
        <Slot $w={16} $h={22} aria-label="Увеличить">
          <Svg w={8} h={8} stroke="#555"><path d="M4 0v8M0 4h8" strokeWidth="2" /></Svg>
        </Slot>
        <Spacer $w={10} />
        <span>145%</span>
      </StatusBar>
    </Window>
  );
}
